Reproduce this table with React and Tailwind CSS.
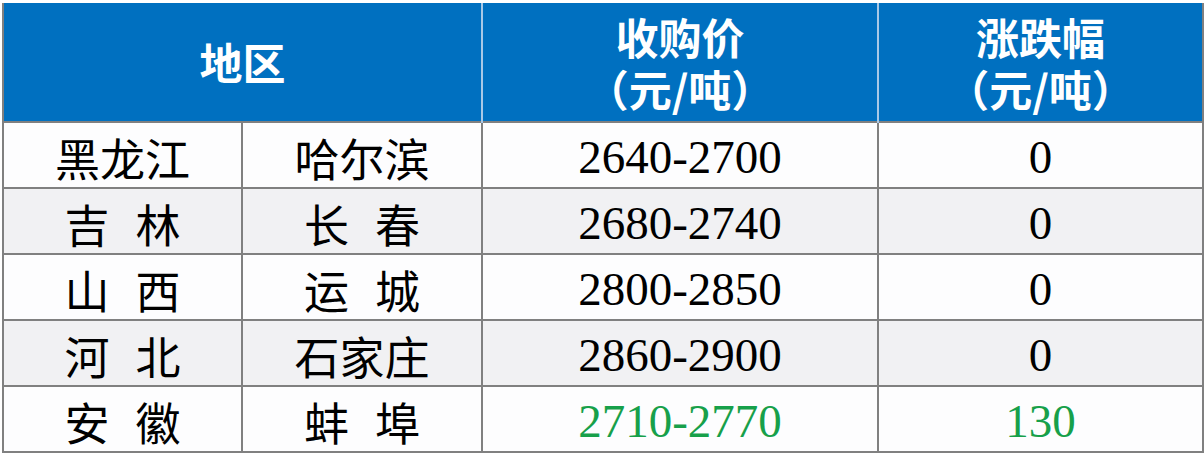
const rows = [
  { prov: ['黑龙江'], city: ['哈尔滨'], price: '2640-2700', change: '0' },
  { prov: ['吉', '林'], city: ['长', '春'], price: '2680-2740', change: '0', shade: true },
  { prov: ['山', '西'], city: ['运', '城'], price: '2800-2850', change: '0' },
  { prov: ['河', '北'], city: ['石家庄'], price: '2860-2900', change: '0', shade: true },
  { prov: ['安', '徽'], city: ['蚌', '埠'], price: '2710-2770', change: '130', up: true },
];

const cjk = "font-['Noto_Sans_CJK_SC',sans-serif]";
const serif = "font-['Liberation_Serif','Times_New_Roman',serif]";

function Spaced({ parts }) {
  return (
    <span className="inline-flex justify-center gap-[26px]">
      {parts.map((p, i) => (
        <span key={i}>{p}</span>
      ))}
    </span>
  );
}

export default function App() {
  return (
    <div className="w-[1204px] h-[456px] bg-white pt-[3px] pl-[2px] overflow-hidden">
      <table className="table-fixed border-collapse w-[1200px]">
        <colgroup>
          <col className="w-[239px]" />
          <col className="w-[240px]" />
          <col className="w-[396px]" />
          <col className="w-[325px]" />
        </colgroup>
        <thead>
          <tr className={`h-[119px] bg-[#0070c0] text-white font-bold text-[43px] leading-[52px] ${cjk}`}>
            <th colSpan={2} className="p-0 border-r-2 border-r-[#a9c8e6] border-l-2 border-l-[#808080] pb-[2px]">地区</th>
            <th className="p-0 border-r-2 border-r-[#a9c8e6]">
              <div>收购价</div>
              <div>（元/吨）</div>
            </th>
            <th className="p-0 border-r-2 border-r-[#808080]">
              <div>涨跌幅</div>
              <div>（元/吨）</div>
            </th>
          </tr>
        </thead>
        <tbody>
          {rows.map((r, i) => (
            <tr key={i} className={`h-[66px] leading-none ${r.shade ? 'bg-[#f1f1f3]' : 'bg-[#fdfdfe]'}`}>
              <td className={`p-0 pt-[4px] border-2 border-[#808080] text-center text-[45px] text-black ${cjk}`}>
                <Spaced parts={r.prov} />
              </td>
              <td className={`p-0 pt-[4px] border-2 border-[#808080] text-center text-[45px] text-black ${cjk}`}>
                <Spaced parts={r.city} />
              </td>
              <td className={`p-0 pt-[4px] border-2 border-[#808080] text-center text-[47px] ${serif} ${r.up ? 'text-[#17a04a]' : 'text-black'}`}>
                {r.price}
              </td>
              <td className={`p-0 pt-[4px] border-2 border-[#808080] text-center text-[47px] ${serif} ${r.up ? 'text-[#17a04a]' : 'text-black'}`}>
                {r.change}
              </td>
            </tr>
          ))}
        </tbody>
      </table>
    </div>
  );
}
